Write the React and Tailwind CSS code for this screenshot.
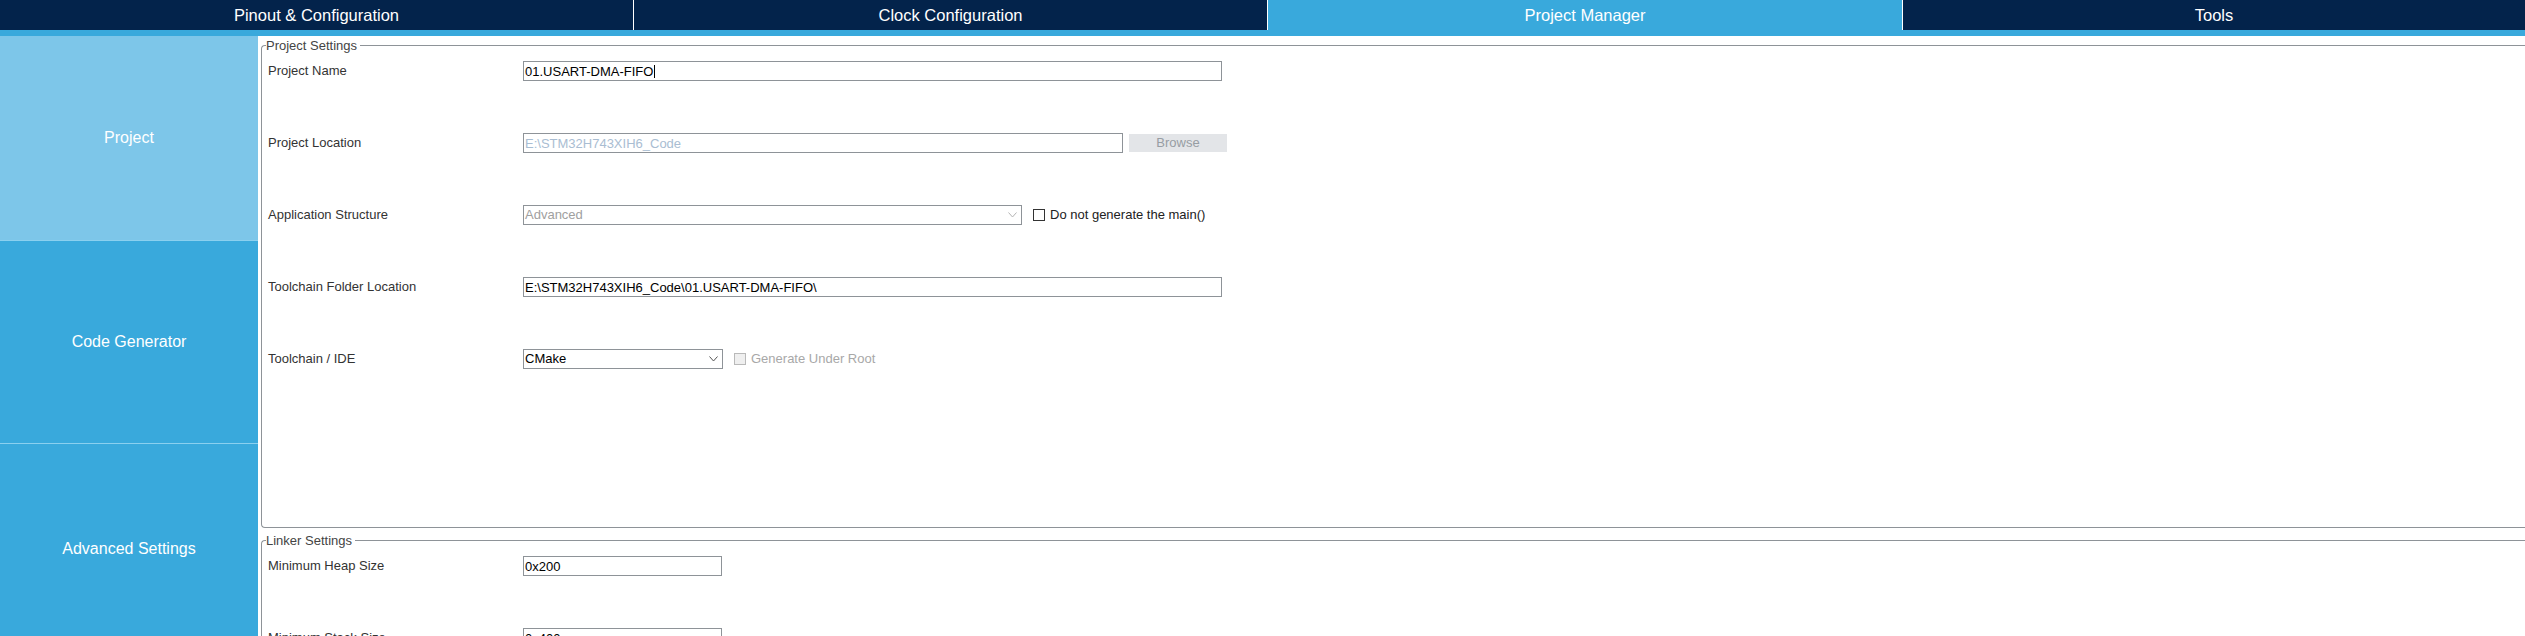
import React from 'react';

const tabs = ['Pinout & Configuration', 'Clock Configuration', 'Project Manager', 'Tools'];
const sideItems = [
  { label: 'Project', active: true, h: 'h-[205px]' },
  { label: 'Code Generator', active: false, h: 'h-[203px]' },
  { label: 'Advanced Settings', active: false, h: 'h-[211px]' },
];

function Chevron({ color }) {
  return (
    <svg width="9" height="6" viewBox="0 0 9 6" className="shrink-0">
      <polyline points="0.5,0.5 4.5,5 8.5,0.5" fill="none" stroke={color} strokeWidth="1" />
    </svg>
  );
}

function Row({ label, children }) {
  return (
    <div className="flex items-center h-[20px]">
      <div className="w-[255px] shrink-0 text-[13px] text-[#333]">{label}</div>
      {children}
    </div>
  );
}

function Field({ width, value, muted, caret }) {
  return (
    <div className={`${width} h-[20px] border border-[#8e9398] bg-white flex items-center pl-[1px] text-[13px] leading-none ${muted ? 'text-[#a9bdd2]' : 'text-black'}`}>
      <span className={caret ? 'border-r border-black pr-[1px]' : ''}>{value}</span>
    </div>
  );
}

function Select({ width, value, disabled }) {
  return (
    <div className={`${width} h-[20px] border border-[#8e9398] bg-white flex items-center justify-between pl-[1px] pr-[4px] text-[13px] ${disabled ? 'text-[#a0a0a0]' : 'text-black'}`}>
      <span>{value}</span>
      <Chevron color={disabled ? '#b4b4b4' : '#555'} />
    </div>
  );
}

function Check({ label, disabled }) {
  return (
    <div className="flex items-center ml-[11px] gap-[5px]">
      <div className={`w-[12px] h-[12px] border ${disabled ? 'border-[#b9b9b9] bg-[#efefef]' : 'border-[#333] bg-white'}`} />
      <span className={`text-[13px] ${disabled ? 'text-[#a8a8a8]' : 'text-[#222]'}`}>{label}</span>
    </div>
  );
}

function Group({ title, className, children }) {
  return (
    <fieldset className={`border border-r-0 border-[#8e9398] rounded-l-[4px] pl-[4px] pt-[8px] ${className}`}>
      <legend className="text-[13px] leading-[15px] text-[#444] pr-[3px]">{title}</legend>
      <div className="flex flex-col gap-[52px] pl-[2px]">{children}</div>
    </fieldset>
  );
}

export default function App() {
  return (
    <div className="h-screen overflow-hidden bg-white font-['Liberation_Sans',Arial,sans-serif]">
      <div className="grid grid-cols-[633px_634px_635px_1fr] h-[30px] bg-[#03234b]">
        {tabs.map((t, i) => (
          <div
            key={t}
            className={`flex items-center justify-center text-[16.5px] text-white ${i > 0 ? 'border-l border-white' : ''} ${t === 'Project Manager' ? 'bg-[#39a9dc]' : ''}`}
          >
            {t}
          </div>
        ))}
      </div>
      <div className="h-[6px] bg-[#39a9dc]" />

      <div className="flex">
        <div className="w-[258px] shrink-0 bg-[#39a9dc]">
          {sideItems.map((s) => (
            <div
              key={s.label}
              className={`${s.h} flex items-center justify-center text-[16px] text-white border-b border-[#8bd0ef] ${s.active ? 'bg-[#7dc6e9] border-[#7dc6e9]' : ''}`}
            >
              {s.label}
            </div>
          ))}
        </div>

        <div className="flex-1 min-w-0 pl-[3px]">
          <Group title="Project Settings" className="mt-[2px] pb-[158px]">
            <Row label="Project Name">
              <Field width="w-[699px]" value="01.USART-DMA-FIFO" caret />
            </Row>
            <Row label="Project Location">
              <Field width="w-[600px]" value="E:\STM32H743XIH6_Code" muted />
              <div className="ml-[6px] w-[98px] h-[18px] bg-[#e3e5e8] text-[#979da3] text-[13px] flex items-center justify-center">Browse</div>
            </Row>
            <Row label="Application Structure">
              <Select width="w-[499px]" value="Advanced" disabled />
              <Check label="Do not generate the main()" />
            </Row>
            <Row label="Toolchain Folder Location">
              <Field width="w-[699px]" value="E:\STM32H743XIH6_Code\01.USART-DMA-FIFO\" />
            </Row>
            <Row label="Toolchain / IDE">
              <Select width="w-[200px]" value="CMake" />
              <Check label="Generate Under Root" disabled />
            </Row>
          </Group>

          <Group title="Linker Settings" className="mt-[5px] pb-[40px]">
            <Row label="Minimum Heap Size">
              <Field width="w-[199px]" value="0x200" />
            </Row>
            <Row label="Minimum Stack Size">
              <Field width="w-[199px]" value="0x400" />
            </Row>
          </Group>
        </div>
      </div>
    </div>
  );
}
